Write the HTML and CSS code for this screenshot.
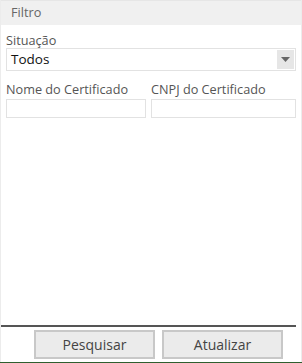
FILE: index.html
```html
<!DOCTYPE html>
<html lang="pt">
<head>
<meta charset="utf-8">
<link rel="stylesheet" href="styles.css">
</head>
<body>
<div class="panel">
  <div class="header">Filtro</div>
  <div class="content">
    <div class="field">
      <label class="label">Situação</label>
      <div class="select">
        <span class="select-value">Todos</span>
        <span class="select-btn"><svg width="9" height="5" viewBox="0 0 9 5"><path d="M0 0H9L4.5 5Z" fill="#666"/></svg></span>
      </div>
    </div>
    <div class="row">
      <div class="field col-left">
        <label class="label">Nome do Certificado</label>
        <div class="input"></div>
      </div>
      <div class="field col-right">
        <label class="label">CNPJ do Certificado</label>
        <div class="input"></div>
      </div>
    </div>
  </div>
  <div class="footer">
    <button class="btn btn-search">Pesquisar</button>
    <button class="btn">Atualizar</button>
  </div>
  <div class="bottom-bar"></div>
</div>
</body>
</html>
```

FILE: styles.css
```css
* { box-sizing: border-box; }
html, body { margin: 0; padding: 0; background: #fff; }
body { font-family: "Open Sans", "Noto Sans", sans-serif; font-size: 12.7px; }
.panel {
  width: 302px;
  height: 363px;
  display: flex;
  flex-direction: column;
  border-left: 1px solid #ececec;
  border-right: 1px solid #ececec;
}
.header {
  height: 25px;
  background: #f0f0f0;
  border-top: 1px solid #e6e6e6;
  color: #666;
  padding-left: 10px;
  line-height: 23px;
}
.content {
  flex: 1;
  padding: 7px 5px 0 5px;
}
.label {
  display: block;
  color: #555;
  line-height: 16px;
  height: 16px;
}
.select {
  height: 23px;
  width: 290px;
  border: 1px solid #e2e2e2;
  display: flex;
  align-items: stretch;
  padding: 1px;
}
.select-value {
  flex: 1;
  color: #111;
  padding-left: 3px;
  font-size: 13.5px;
  line-height: 19px;
}
.select-btn {
  width: 17px;
  background: #e6e6e6;
  display: flex;
  align-items: center;
  justify-content: center;
}
.row {
  display: flex;
  gap: 5px;
  margin-top: 10px;
}
.col-left { width: 140px; }
.col-right { width: 145px; }
.input {
  height: 19px;
  border: 1px solid #e2e2e2;
  margin-top: 2px;
}
.footer {
  border-top: 2px solid #555;
  margin-right: 5px;
  height: 37px;
  display: flex;
  gap: 7px;
  padding: 3px 0 0 33px;
}
.btn {
  width: 121px;
  height: 29px;
  background: #ebebeb;
  border: 2px solid #c8c8c8;
  color: #444;
  font-family: "Open Sans", "Noto Sans", sans-serif;
  font-size: 14px;
  padding: 0;
  margin: 0;
}
.bottom-bar {
  height: 1px;
  background: #2f5f2f;
  margin-left: -1px;
  margin-right: -1px;
}
```
